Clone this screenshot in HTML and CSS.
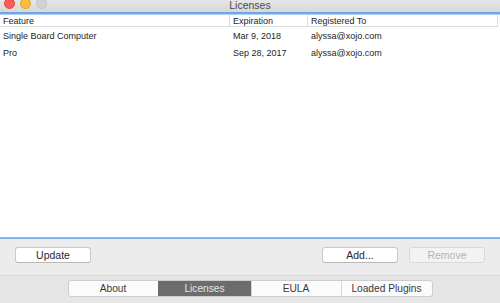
FILE: index.html
```html
<!DOCTYPE html>
<html>
<head>
<meta charset="utf-8">
<link rel="stylesheet" href="styles.css">
</head>
<body>
<div class="window">
  <div class="titlebar">
    <div class="lights">
      <span class="light red"></span>
      <span class="light yellow"></span>
      <span class="light gray"></span>
    </div>
    <div class="title">Licenses</div>
    <div></div>
  </div>
  <div class="focus-line"></div>
  <div class="table">
    <div class="row header">
      <div class="cell">Feature</div>
      <div class="cell sep">Expiration</div>
      <div class="cell sep">Registered To</div>
    </div>
    <div class="row">
      <div class="cell">Single Board Computer</div>
      <div class="cell">Mar 9, 2018</div>
      <div class="cell">alyssa@xojo.com</div>
    </div>
    <div class="row">
      <div class="cell">Pro</div>
      <div class="cell">Sep 28, 2017</div>
      <div class="cell">alyssa@xojo.com</div>
    </div>
  </div>
  <div class="focus-line bottom"></div>
  <div class="panel">
    <div class="buttons">
      <button class="btn">Update</button>
      <div class="spacer"></div>
      <button class="btn">Add...</button>
      <button class="btn disabled">Remove</button>
    </div>
    <div class="tabbar">
      <div class="segmented">
        <div class="seg">About</div>
        <div class="seg active">Licenses</div>
        <div class="seg">EULA</div>
        <div class="seg">Loaded Plugins</div>
      </div>
    </div>
  </div>
</div>
</body>
</html>
```
FILE: styles.css
```css
html, body {
  margin: 0;
  padding: 0;
}
body {
  width: 500px;
  height: 303px;
  overflow: hidden;
  font-family: "Liberation Sans", Arial, sans-serif;
  color: #1e1e1e;
}
.window {
  width: 500px;
  height: 303px;
  display: flex;
  flex-direction: column;
  background: #ececec;
}
.titlebar {
  height: 12px;
  display: grid;
  grid-template-columns: 1fr auto 1fr;
  align-items: start;
  background: linear-gradient(#e6e6e6, #d8d8d8);
  overflow: hidden;
}
.lights {
  display: flex;
  gap: 5px;
  padding-left: 4px;
  margin-top: -2px;
}
.light {
  width: 11px;
  height: 11px;
  border-radius: 50%;
  box-sizing: border-box;
}
.red { background: #fc5b57; border: 0.5px solid #e2463f; }
.yellow { background: #fdbd39; border: 0.5px solid #e1a123; }
.gray { background: #d3d3d3; border: 0.5px solid #c2c2c2; }
.title {
  font-size: 10.5px;
  line-height: 11px;
  color: #4a4a4a;
}
.focus-line {
  height: 2px;
  background: #6ea6e7;
  border-bottom: 1px solid #b4d2f4;
}
.focus-line.bottom {
  height: 1px;
  border-top: 1px solid #8fbaec;
  border-bottom: none;
  background: #7aaee9;
}
.table {
  flex: 1;
  background: #ffffff;
  font-size: 9px;
}
.row {
  display: grid;
  grid-template-columns: 229px 78px 1fr;
  height: 17px;
  align-items: center;
}
.row .cell {
  padding-left: 3px;
  white-space: nowrap;
}
.row .cell + .cell {
  padding-left: 4px;
}
.row.header {
  height: 11px;
  border-bottom: 1px solid #dcdcdc;
  border-right: 1px solid #dcdcdc;
  margin-right: 2px;
  align-items: stretch;
}
.row.header .cell {
  line-height: 12px;
}
.row.header .sep {
  box-shadow: inset 1px 0 0 #dcdcdc;
}
.panel {
  height: 64px;
  display: flex;
  flex-direction: column;
}
.buttons {
  display: flex;
  align-items: center;
  padding: 8px 15px 0 15px;
  gap: 11px;
  height: 16px;
}
.spacer { flex: 1; }
.btn {
  width: 76px;
  height: 16px;
  padding: 0;
  margin: 0;
  font-family: "Liberation Sans", Arial, sans-serif;
  font-size: 10.5px;
  color: #2a2a2a;
  background: #ffffff;
  border: 1px solid #c9c9c9;
  border-bottom-color: #b8b8b8;
  border-radius: 3px;
  line-height: 14px;
}
.btn.disabled {
  background: #f3f3f3;
  color: #b3b3b3;
  border-color: #d9d9d9;
}
.tabbar {
  margin-top: 12px;
  border-top: 1px solid #d9d9d9;
  flex: 1;
  display: flex;
  justify-content: center;
  padding-top: 4px;
  background: #e6e6e6;
}
.segmented {
  display: flex;
  height: 17px;
  border: 1px solid #cdcdcd;
  border-radius: 3px;
  background: #fbfbfb;
  overflow: hidden;
  box-sizing: border-box;
  font-size: 10.2px;
  color: #3a3a3a;
}
.seg {
  width: 89px;
  text-align: center;
  line-height: 15px;
  border-left: 1px solid #d6d6d6;
}
.seg:first-child { border-left: none; width: 89px; }
.seg:last-child { width: 90px; }
.seg.active {
  background: #6c6c6c;
  color: #e6e6e6;
  border-left-color: #6c6c6c;
  width: 92px;
}
```
